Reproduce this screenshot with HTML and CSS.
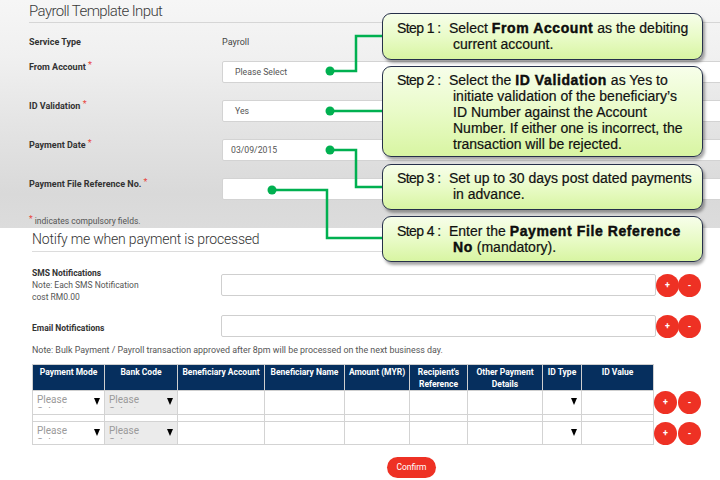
FILE: index.html
```html
<!DOCTYPE html>
<html>
<head>
<meta charset="utf-8">
<link rel="stylesheet" href="styles.css">
</head>
<body>
<div class="page">
  <section class="template">
    <h1 class="title">Payroll Template Input</h1>
    <div class="form">
      <div class="row row-static">
        <div class="label">Service Type</div>
        <div class="value">Payroll</div>
      </div>
      <div class="row">
        <div class="label">From Account <span class="req">*</span></div>
        <div class="input">Please Select</div>
      </div>
      <div class="row">
        <div class="label">ID Validation <span class="req">*</span></div>
        <div class="input">Yes</div>
      </div>
      <div class="row">
        <div class="label">Payment Date <span class="req">*</span></div>
        <div class="input input-date">03/09/2015</div>
      </div>
      <div class="row row-last">
        <div class="label">Payment File Reference No. <span class="req">*</span></div>
        <div class="input"></div>
      </div>
    </div>
    <div class="legend"><span class="req">*</span> indicates compulsory fields.</div>
  </section>

  <section class="notify">
    <h2 class="notify-title">Notify me when payment is processed</h2>
    <div class="nrow nrow-sms">
      <div class="nlabel"><b>SMS Notifications</b><br>Note: Each SMS Notification<br>cost RM0.00</div>
      <div class="ninput"></div>
      <div class="btns"><span class="btn">+</span><span class="btn">-</span></div>
    </div>
    <div class="nrow nrow-email">
      <div class="nlabel nlabel-email"><b>Email Notifications</b></div>
      <div class="ninput"></div>
      <div class="btns"><span class="btn">+</span><span class="btn">-</span></div>
    </div>
    <p class="note">Note: Bulk Payment / Payroll transaction approved after 8pm will be processed on the next business day.</p>

    <table class="grid">
      <colgroup>
        <col class="c1"><col class="c2"><col class="c3"><col class="c4"><col class="c5"><col class="c6"><col class="c7"><col class="c8"><col class="c9"><col class="c10">
      </colgroup>
      <thead>
        <tr>
          <th>Payment Mode</th><th>Bank Code</th><th>Beneficiary Account</th><th>Beneficiary Name</th><th>Amount (MYR)</th><th>Recipient's<br>Reference</th><th>Other Payment<br>Details</th><th>ID Type</th><th>ID Value</th><th class="act"></th>
        </tr>
      </thead>
      <tbody>
        <tr class="r1">
          <td><div class="sel"><span class="ph">Please Select</span><span class="arr"></span></div></td>
          <td class="bank"><div class="sel"><span class="ph">Please Select</span><span class="arr"></span></div></td>
          <td></td><td></td><td></td><td></td><td></td>
          <td><div class="sel"><span class="ph"></span><span class="arr"></span></div></td>
          <td></td>
          <td class="act"><div class="tbtns"><span class="btn">+</span><span class="btn">-</span></div></td>
        </tr>
        <tr class="gap">
          <td></td><td></td><td></td><td></td><td></td><td></td><td></td><td></td><td></td><td class="act"></td>
        </tr>
        <tr class="r2">
          <td><div class="sel"><span class="ph">Please Select</span><span class="arr"></span></div></td>
          <td class="bank"><div class="sel"><span class="ph">Please Select</span><span class="arr"></span></div></td>
          <td></td><td></td><td></td><td></td><td></td>
          <td><div class="sel"><span class="ph"></span><span class="arr"></span></div></td>
          <td></td>
          <td class="act"><div class="tbtns"><span class="btn">+</span><span class="btn">-</span></div></td>
        </tr>
      </tbody>
    </table>
    <div class="confirm-wrap"><button class="confirm">Confirm</button></div>
  </section>

  <svg class="connectors" width="720" height="480" viewBox="0 0 720 480">
    <g fill="none" stroke="#00b050" stroke-width="2.5">
      <path d="M330 71 H356 V36 H383"/>
      <path d="M330 111 H383"/>
      <path d="M330 150 H356 V187 H383"/>
      <path d="M272 190 H327 V238 H383"/>
    </g>
    <g fill="#00b050">
      <circle cx="330" cy="71" r="4.5"/>
      <circle cx="330" cy="111" r="4.5"/>
      <circle cx="330" cy="150" r="4.5"/>
      <circle cx="272" cy="190" r="4.5"/>
    </g>
  </svg>

  <div class="callout co1">
    <span class="step">Step 1 :</span>
    <div class="ctext">Select <b>From Account</b> as the debiting<br>current account.</div>
  </div>
  <div class="callout co2">
    <span class="step">Step 2 :</span>
    <div class="ctext">Select the <b>ID Validation</b> as Yes to<br>initiate validation of the beneficiary’s<br>ID Number against the Account<br>Number. If either one is incorrect, the<br>transaction will be rejected.</div>
  </div>
  <div class="callout co3">
    <span class="step">Step 3 :</span>
    <div class="ctext">Set up to 30 days post dated payments<br>in advance.</div>
  </div>
  <div class="callout co4">
    <span class="step">Step 4 :</span>
    <div class="ctext">Enter the <b>Payment File Reference<br>No</b> (mandatory).</div>
  </div>
</div>
</body>
</html>
```

FILE: styles.css
```css
html, body {
  margin: 0;
  padding: 0;
}
body {
  width: 720px;
  height: 480px;
  overflow: hidden;
  background: #fff;
  font-family: Roboto, "Open Sans", sans-serif;
  color: #333;
}
.page {
  position: relative;
  width: 720px;
  height: 480px;
  overflow: hidden;
}

/* ---------- template panel ---------- */
.template {
  height: 228px;
  box-sizing: border-box;
  padding-left: 29px;
  background: linear-gradient(180deg, #f6f6f6 0%, #f0f0f0 25%, #e4e4e4 55%, #d9d9d9 85%, #dcdcdc 100%);
}
.title {
  margin: 0;
  height: 23px;
  box-sizing: border-box;
  border-bottom: 1px solid #d6d6d6;
  font-size: 15px;
  font-weight: 300;
  line-height: 22px;
  color: #3a3a3a;
  letter-spacing: -0.6px;
}
.form {
  display: flex;
  flex-direction: column;
}
.row {
  display: grid;
  grid-template-columns: 193px 1fr;
  height: 39px;
  align-items: start;
}
.row-static {
  height: 38px;
  align-items: center;
}
.row-last {
  height: 37px;
}
.label {
  font-size: 9px;
  font-weight: 700;
  line-height: 12px;
  color: #333;
}
.value {
  font-size: 9px;
  color: #444;
  line-height: 12px;
}
.req {
  color: #e8453c;
  font-weight: 400;
  position: relative;
  top: -2px;
}
.input {
  width: 520px;
  height: 22px;
  box-sizing: border-box;
  background: #fff;
  border: 1px solid #d3d3d3;
  border-radius: 2px;
  padding-left: 12px;
  font-size: 8.7px;
  line-height: 20px;
  color: #555;
}
.input-date {
  padding-left: 8px;
}
.legend {
  font-size: 8.5px;
  line-height: 13px;
  color: #555;
}

/* ---------- notify section ---------- */
.notify {
  padding-left: 32px;
}
.notify-title {
  margin: 0;
  width: 668px;
  height: 24px;
  box-sizing: border-box;
  border-bottom: 1px solid #dcdcdc;
  font-size: 14px;
  font-weight: 300;
  line-height: 23px;
  color: #333;
  letter-spacing: -0.2px;
}
.nrow {
  display: grid;
  grid-template-columns: 189px 435px auto;
  align-items: start;
}
.nrow-sms {
  margin-top: 15px;
}
.nrow-email {
  margin-top: 12px;
}
.nlabel {
  font-size: 8.5px;
  line-height: 12px;
  color: #555;
}
.nlabel b {
  color: #333;
}
.nlabel-email {
  padding-top: 7px;
}
.ninput {
  height: 22px;
  box-sizing: border-box;
  border: 1px solid #cfcfcf;
  border-radius: 2px;
  background: #fff;
}
.nrow-sms .ninput,
.nrow-sms .btns {
  margin-top: 7px;
}
.btns {
  display: flex;
}
.btn {
  width: 23px;
  height: 23px;
  border-radius: 50%;
  background: #ee3124;
  color: #fff;
  font-size: 9px;
  font-weight: 700;
  line-height: 22px;
  text-align: center;
  flex: none;
}
.btns .btn + .btn {
  margin-left: -1px;
}
.note {
  margin: 6px 0 0;
  font-size: 8.9px;
  line-height: 12px;
  color: #555;
}

/* ---------- table ---------- */
.grid {
  margin-top: 8px;
  border-collapse: collapse;
  table-layout: fixed;
  width: 671px;
}
.c1 { width: 72px; }
.c2 { width: 73px; }
.c3 { width: 87px; }
.c4 { width: 80px; }
.c5 { width: 65px; }
.c6 { width: 58px; }
.c7 { width: 75px; }
.c8 { width: 39px; }
.c9 { width: 72px; }
.c10 { width: 50px; }
.grid th {
  height: 25px;
  box-sizing: border-box;
  padding: 1px 0 0;
  vertical-align: top;
  background: #062f5e;
  border: 1px solid #cfcfcf;
  color: #fff;
  font-size: 8.5px;
  font-weight: 700;
  line-height: 12px;
  text-align: center;
  white-space: nowrap;
}
.grid td {
  border: 1px solid #d3d3d3;
  padding: 0;
  background: #fff;
  vertical-align: top;
}
.grid th.act,
.grid td.act {
  background: transparent;
  border: none;
}
.grid .r1 td { height: 23px; }
.grid .gap td { height: 6px; }
.grid .r2 td { height: 22px; }
.grid td.bank {
  background: #ebebeb;
}
.sel {
  position: relative;
  height: 17px;
  overflow: hidden;
}
.ph {
  display: block;
  width: 48px;
  padding: 3px 0 0 4px;
  font-size: 10px;
  line-height: 12px;
  color: #9a9a9a;
}
.arr {
  position: absolute;
  right: 4px;
  top: 7px;
  width: 0;
  height: 0;
  border-left: 3.5px solid transparent;
  border-right: 3.5px solid transparent;
  border-top: 7px solid #000;
}
.tbtns {
  display: flex;
  gap: 1px;
  padding-top: 0;
}
.confirm-wrap {
  padding-left: 355px;
  margin-top: 10px;
}
.confirm {
  width: 49px;
  height: 21px;
  border: none;
  border-radius: 11px;
  background: #ee3124;
  color: #fff;
  font-family: Roboto, sans-serif;
  font-size: 8.5px;
  padding: 0;
}

/* ---------- overlays ---------- */
.connectors {
  position: absolute;
  left: 0;
  top: 0;
  pointer-events: none;
}
.callout {
  position: absolute;
  left: 382px;
  width: 321px;
  box-sizing: border-box;
  display: flex;
  padding: 6px 8px 0 14px;
  border: 1px solid #26304a;
  border-radius: 9px;
  background: linear-gradient(180deg, #f7feea 0%, #e9fbc8 50%, #d8f5a2 100%);
  box-shadow: 2px 3px 3px rgba(0, 0, 0, 0.35);
  font-family: "Liberation Sans", Arial, sans-serif;
  font-size: 14px;
  line-height: 16px;
  color: #111;
  -webkit-text-stroke: 0.2px #111;
}
.co1 { top: 13px; height: 47px; }
.co2 { top: 66px; height: 91px; padding-top: 5px; }
.co3 { top: 164px; height: 46px; padding-top: 5px; }
.co4 { top: 216px; height: 46px; }
.step {
  flex: none;
  width: 52px;
  white-space: nowrap;
  letter-spacing: -0.6px;
}
.ctext {
  padding-left: 4px;
  text-indent: -4px;
  white-space: nowrap;
}
.ctext b {
  font-weight: 700;
  letter-spacing: 0.6px;
  -webkit-text-stroke: 0.4px #000;
}
```
